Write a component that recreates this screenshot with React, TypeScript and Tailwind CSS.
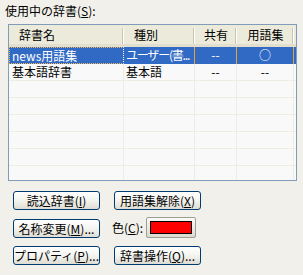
import React from 'react'

const font = { fontFamily: '"Noto Sans CJK JP", "Noto Sans", sans-serif' }

type Row = { name: string; kind: string; shared: string; glossary: string; selected?: boolean }

const rows: Row[] = [
  { name: 'news用語集', kind: 'ユーザー(書...', shared: '--', glossary: '○', selected: true },
  { name: '基本語辞書', kind: '基本語', shared: '--', glossary: '--' },
  { name: '', kind: '', shared: '', glossary: '' },
  { name: '', kind: '', shared: '', glossary: '' },
  { name: '', kind: '', shared: '', glossary: '' },
  { name: '', kind: '', shared: '', glossary: '' },
  { name: '', kind: '', shared: '', glossary: '' },
  { name: '', kind: '', shared: '', glossary: '' },
]

function XpButton({ children, className = '' }: { children: React.ReactNode; className?: string }) {
  return (
    <button
      className={`h-[19px] w-[87px] rounded-[3px] border border-[#003c74] bg-gradient-to-b from-white via-[#f4f4f0] to-[#dedcd2] text-[12px] leading-[17px] text-black flex items-center justify-center ${className}`}
    >
      {children}
    </button>
  )
}

function HeaderCell({ label, width, align }: { label: string; width: string; align: 'left' | 'center' }) {
  return (
    <div className={`relative h-full flex items-center ${width} ${align === 'center' ? 'justify-center' : 'pl-[10px]'}`}>
      <span>{label}</span>
      <div className="absolute right-0 top-[3px] h-[16px] w-[2px] border-l border-[#c7c5b2] border-r-white" style={{ borderRightWidth: 1 }} />
    </div>
  )
}

export default function App() {
  return (
    <div className="w-[303px] h-[275px] bg-[#f1f0ea] text-black overflow-hidden" style={font}>
      <div className="pl-[5px] pt-[4px] text-[12px] leading-[14px]">
        使用中の辞書(<u>S</u>):
      </div>

      {/* Dictionary list */}
      <div className="ml-[8px] mt-[6px] w-[289px] h-[157px] border border-[#7f9db9] bg-[#f9f9f9] overflow-hidden text-[12px]">
        <div className="flex h-[22px] bg-[#ebeadb] border-b-[3px] border-[#e2dfcf]">
          <HeaderCell label="辞書名" width="w-[115px]" align="left" />
          <HeaderCell label="種別" width="w-[71px]" align="left" />
          <HeaderCell label="共有" width="w-[42px]" align="center" />
          <HeaderCell label="用語集" width="w-[57px]" align="center" />
        </div>
        {rows.map((r, i) =>
          r.selected ? (
            <div key={i} className="flex h-[17px] bg-[#316ac5] text-white leading-[16px]">
              <div className="w-[115px] pl-[2px] border border-dotted border-[#f0b858] border-r-white whitespace-nowrap overflow-hidden">{r.name}</div>
              <div className="w-[71px] pl-[2px] border-r border-[#e8a33c] whitespace-nowrap overflow-hidden tracking-[-1.2px]">{r.kind}</div>
              <div className="w-[42px] text-center border-r border-[#e8a33c]">{r.shared}</div>
              <div className="w-[57px] text-center border-r border-[#e8a33c]">{r.glossary}</div>
            </div>
          ) : (
            <div key={i} className="flex h-[17px] border-b border-[#efede2] leading-[16px]">
              <div className="w-[115px] pl-[3px] border-r border-[#efede2] whitespace-nowrap overflow-hidden">{r.name}</div>
              <div className="w-[71px] pl-[2px] border-r border-[#efede2] whitespace-nowrap overflow-hidden">{r.kind}</div>
              <div className="w-[42px] text-center border-r border-[#efede2]">{r.shared}</div>
              <div className="w-[57px] text-center border-r border-[#efede2]">{r.glossary}</div>
            </div>
          )
        )}
      </div>

      {/* Buttons */}
      <div className="ml-[13px] mt-[10px] flex flex-col gap-[8px]">
        <div className="flex gap-[14px]">
          <XpButton>読込辞書(<u>I</u>)</XpButton>
          <XpButton>用語集解除(<u>X</u>)</XpButton>
        </div>
        <div className="flex items-center">
          <XpButton>名称変更(<u>M</u>)...</XpButton>
          <span className="ml-[12px] text-[12px]">色(<u>C</u>):</span>
          <button className="ml-[3px] -mt-[1px] h-[21px] w-[50px] border border-[#9d9d92] rounded-[2px] bg-gradient-to-b from-[#fafaf8] to-[#dcdad0] flex items-center justify-center">
            <div className="h-[13px] w-[42px] border border-black bg-[#ff0000]" />
          </button>
        </div>
        <div className="flex gap-[14px]">
          <XpButton>プロパティ(<u>P</u>)...</XpButton>
          <XpButton>辞書操作(<u>Q</u>)...</XpButton>
        </div>
      </div>
    </div>
  )
}
